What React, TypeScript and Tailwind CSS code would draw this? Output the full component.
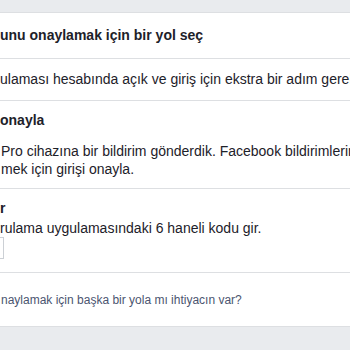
import React from "react";

export default function App() {
  return (
    <div
      className="w-[350px] h-[350px] overflow-hidden bg-[#e9ebee] text-[#1d2129] whitespace-nowrap"
      style={{ fontFamily: '"Liberation Sans", Arial, Helvetica, sans-serif' }}
    >
      <div className="h-[12px]" />
      <div className="bg-white border-y border-[#dddfe2]">
        <div className="h-[46px] pt-[13px] border-b border-[#dddfe2]">
          <div className="text-[14px] leading-[18px] font-bold">unu onaylamak için bir yol seç</div>
        </div>
        <div className="h-[42px] pt-[11px] border-b border-[#dddfe2]">
          <div className="text-[14px] leading-[18px]">
            ulaması hesabında açık ve giriş için ekstra bir adım gerektiriyor.
          </div>
        </div>
        <div className="h-[88px] pt-[10px] border-b border-[#dddfe2]">
          <div className="text-[14px] leading-[18px] font-bold">onayla</div>
          <div className="mt-[13px] text-[14px] leading-[18px]">
            <div className="pl-px">Pro cihazına bir bildirim gönderdik. Facebook bildirimlerini aç</div>
            <div className="pl-px">mek için girişi onayla.</div>
          </div>
        </div>
        <div className="h-[84px] pt-[10px] border-b border-[#dddfe2]">
          <div className="text-[14px] leading-[18px] font-bold">r</div>
          <div className="mt-[2px] text-[14px] leading-[18px]">rulama uygulamasındaki 6 haneli kodu gir.</div>
          <div className="w-[4px] h-[22px] border border-l-0 border-[#ccd0d5] bg-white" />
        </div>
        <div className="h-[53px] pt-[19px]">
          <div className="pl-px text-[12px] leading-[16px] text-[#4b5570]">
            naylamak için başka bir yola mı ihtiyacın var?
          </div>
        </div>
      </div>
    </div>
  );
}
